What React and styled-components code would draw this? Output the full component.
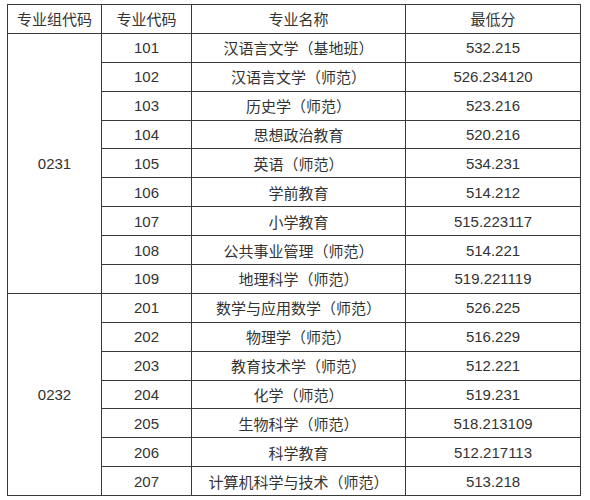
import styled, { createGlobalStyle } from "styled-components";

const GlobalStyle = createGlobalStyle`
  html, body {
    margin: 0;
    padding: 0;
    background: #fff;
  }
  body {
    font-family: "Liberation Sans", "Noto Sans CJK SC", Arial, sans-serif;
    color: #333;
  }
`;

const groups = [
  {
    code: "0231",
    rows: [
      ["101", "汉语言文学（基地班）", "532.215"],
      ["102", "汉语言文学（师范）", "526.234120"],
      ["103", "历史学（师范）", "523.216"],
      ["104", "思想政治教育", "520.216"],
      ["105", "英语（师范）", "534.231"],
      ["106", "学前教育", "514.212"],
      ["107", "小学教育", "515.223117"],
      ["108", "公共事业管理（师范）", "514.221"],
      ["109", "地理科学（师范）", "519.221119"],
    ],
  },
  {
    code: "0232",
    rows: [
      ["201", "数学与应用数学（师范）", "526.225"],
      ["202", "物理学（师范）", "516.229"],
      ["203", "教育技术学（师范）", "512.221"],
      ["204", "化学（师范）", "519.231"],
      ["205", "生物科学（师范）", "518.213109"],
      ["206", "科学教育", "512.217113"],
      ["207", "计算机科学与技术（师范）", "513.218"],
    ],
  },
];

const Wrap = styled.div`
  padding: 4px 0 0 7px;
`;

const Table = styled.table`
  border-collapse: collapse;
  table-layout: fixed;
  width: 573px;
  font-size: 15px;
`;

const Row = styled.tr`
  height: 28.9px;
`;

const Cell = styled.td`
  border: 1px solid #3a3a3a;
  text-align: center;
  vertical-align: middle;
  padding: 0;
  white-space: nowrap;
  color: #333;
`;

const HeadCell = styled(Cell).attrs({ as: "th" })`
  font-weight: normal;
`;

export default function App() {
  return (
    <>
      <GlobalStyle />
      <Wrap>
        <Table>
          <colgroup>
            <col style={{ width: 94 }} />
            <col style={{ width: 90 }} />
            <col style={{ width: 214 }} />
            <col style={{ width: 175 }} />
          </colgroup>
          <thead>
            <Row>
              <HeadCell>专业组代码</HeadCell>
              <HeadCell>专业代码</HeadCell>
              <HeadCell>专业名称</HeadCell>
              <HeadCell>最低分</HeadCell>
            </Row>
          </thead>
          <tbody>
            {groups.map((g) =>
              g.rows.map((r, i) => (
                <Row key={r[0]}>
                  {i === 0 && <Cell rowSpan={g.rows.length}>{g.code}</Cell>}
                  <Cell>{r[0]}</Cell>
                  <Cell>{r[1]}</Cell>
                  <Cell>{r[2]}</Cell>
                </Row>
              ))
            )}
          </tbody>
        </Table>
      </Wrap>
    </>
  );
}
